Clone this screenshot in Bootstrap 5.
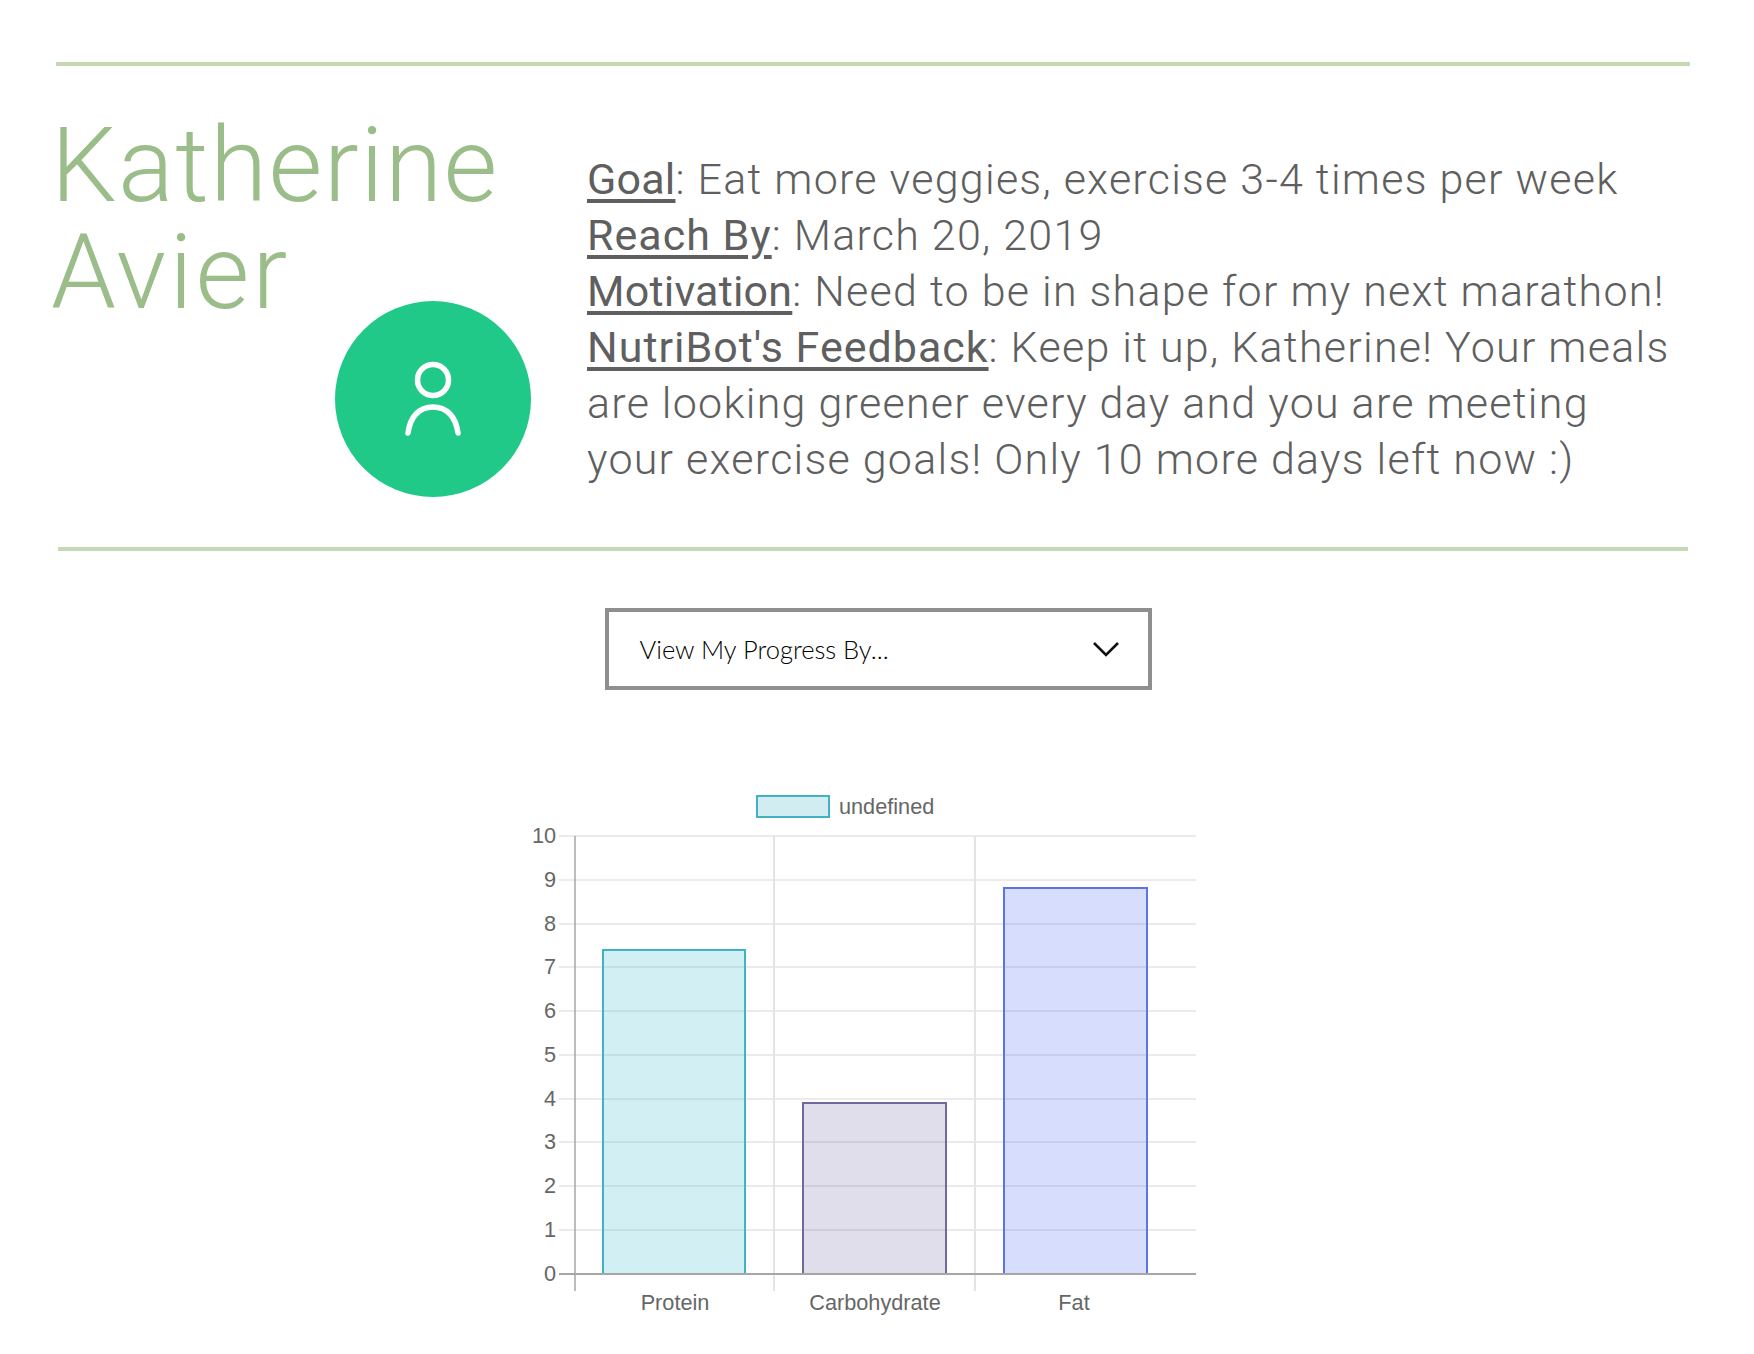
<!DOCTYPE html>
<html lang="en">
<head>
<meta charset="utf-8">
<title>Katherine Avier</title>
<link rel="stylesheet" href="https://cdn.jsdelivr.net/npm/bootstrap@5.3.0/dist/css/bootstrap.min.css">
<style>
body { background:#fff; height:1354px; overflow:hidden; }
.rule-line { height:4px; background:#c5d9b4; }
.rule-top { margin:62px 64px 0 56px; }
.rule-bottom { margin:0 66px 0 58px; }
.profile-band { height:481px; padding-left:51px; }
.name-col { width:480px; flex:none; }
.person-name { font-family:Roboto,sans-serif; font-weight:300; font-size:104px; line-height:107px; letter-spacing:1.4px; color:#9bbd8a; margin:46px 0 0; }
.name-wide { letter-spacing:2.9px; }
.avatar-disc { width:196px; height:196px; border-radius:50%; background:#20c987; margin:-25px 0 0 284px; }
.goal-text { font-family:Roboto,sans-serif; font-weight:300; font-size:43px; line-height:56px; letter-spacing:1.25px; color:#5f5f5f; margin:85px 0 0 56px; white-space:nowrap; }
.goal-text u { font-weight:400; letter-spacing:.2px; text-decoration-thickness:4px; text-underline-offset:5px; }
.goal-text u.label-wide { letter-spacing:1px; }
.select-wrap, .chart-wrap { padding-left:2px; }
.progress-select { width:547px; height:82px; border:4px solid #8f8f8f; border-radius:0; background:#fff; padding:0 28px 0 31px; font-family:Lato,sans-serif; font-weight:300; font-size:25.5px; color:#000; margin-top:57px; }
.progress-select:hover, .progress-select:active { background:#fff; border-color:#8f8f8f; color:#000; }
.chart-wrap { margin-top:14px; }
.chart-wrap text { font-family:"Liberation Sans",Arial,sans-serif; font-size:21.7px; fill:#666; }
</style>
</head>
<body>
<div class="rule-line rule-top"></div>
<section class="profile-band d-flex">
  <div class="name-col">
    <h1 class="person-name">Katherine<br><span class="name-wide">Avier</span></h1>
    <div class="avatar-disc">
      <svg width="196" height="196" viewBox="0 0 196 196" fill="none" stroke="#fff" stroke-width="5.5" stroke-linecap="round" aria-hidden="true">
        <circle cx="98" cy="79" r="15.5"/>
        <path d="M73 132C75 116 84 106 98 106C112 106 121 116 123 132"/>
      </svg>
    </div>
  </div>
  <p class="goal-text">
    <u>Goal</u>: Eat more veggies, exercise 3-4 times per week<br>
    <u class="label-wide">Reach By</u>: March 20, 2019<br>
    <u>Motivation</u>: Need to be in shape for my next marathon!<br>
    <u class="label-wide">NutriBot's Feedback</u>: Keep it up, Katherine! Your meals<br>
    are looking greener every day and you are meeting<br>
    your exercise goals! Only 10 more days left now :)
  </p>
</section>
<div class="rule-line rule-bottom"></div>
<div class="select-wrap d-flex justify-content-center">
  <button type="button" class="btn progress-select d-flex align-items-center justify-content-between">
    <span>View My Progress By...</span>
    <svg width="28" height="16" viewBox="0 0 28 16" fill="none" stroke="#111" stroke-width="2.6" aria-hidden="true"><path d="M2 2L14 14L26 2"/></svg>
  </button>
</div>
<div class="chart-wrap d-flex justify-content-center">
  <svg width="716" height="640" viewBox="0 0 716 640" role="img" aria-label="Bar chart">
    <rect x="237" y="92" width="72" height="21" fill="#d2edf1" stroke="#3fb3c4" stroke-width="2"/>
    <text x="319" y="110">undefined</text>
    <path d="M39 132H676M39 176H676M39 220H676M39 263H676M39 307H676M39 351H676M39 395H676M39 438H676M39 482H676M39 526H676" stroke="#ebebeb" stroke-width="2"/>
    <path d="M254 132V587M455 132V587" stroke="#e4e4e4" stroke-width="2"/>
    <rect x="83" y="246" width="142" height="324" fill="rgba(75,192,208,.25)" stroke="#3fb3c4" stroke-width="2"/>
    <rect x="283" y="399" width="143" height="171" fill="rgba(80,70,140,.18)" stroke="#6f6a9e" stroke-width="2"/>
    <rect x="484" y="184" width="143" height="386" fill="rgba(80,110,240,.23)" stroke="#5b74e0" stroke-width="2"/>
    <path d="M55 132V587" stroke="#a6a6a6" stroke-width="1.5"/>
    <path d="M39 570H676" stroke="#a6a6a6" stroke-width="2"/>
    <g text-anchor="end">
      <text x="36" y="139">10</text><text x="36" y="183">9</text><text x="36" y="227">8</text><text x="36" y="270">7</text><text x="36" y="314">6</text><text x="36" y="358">5</text><text x="36" y="402">4</text><text x="36" y="445">3</text><text x="36" y="489">2</text><text x="36" y="533">1</text><text x="36" y="577">0</text>
    </g>
    <g text-anchor="middle">
      <text x="155" y="606">Protein</text><text x="355" y="606">Carbohydrate</text><text x="554" y="606">Fat</text>
    </g>
  </svg>
</div>
</body>
</html>
